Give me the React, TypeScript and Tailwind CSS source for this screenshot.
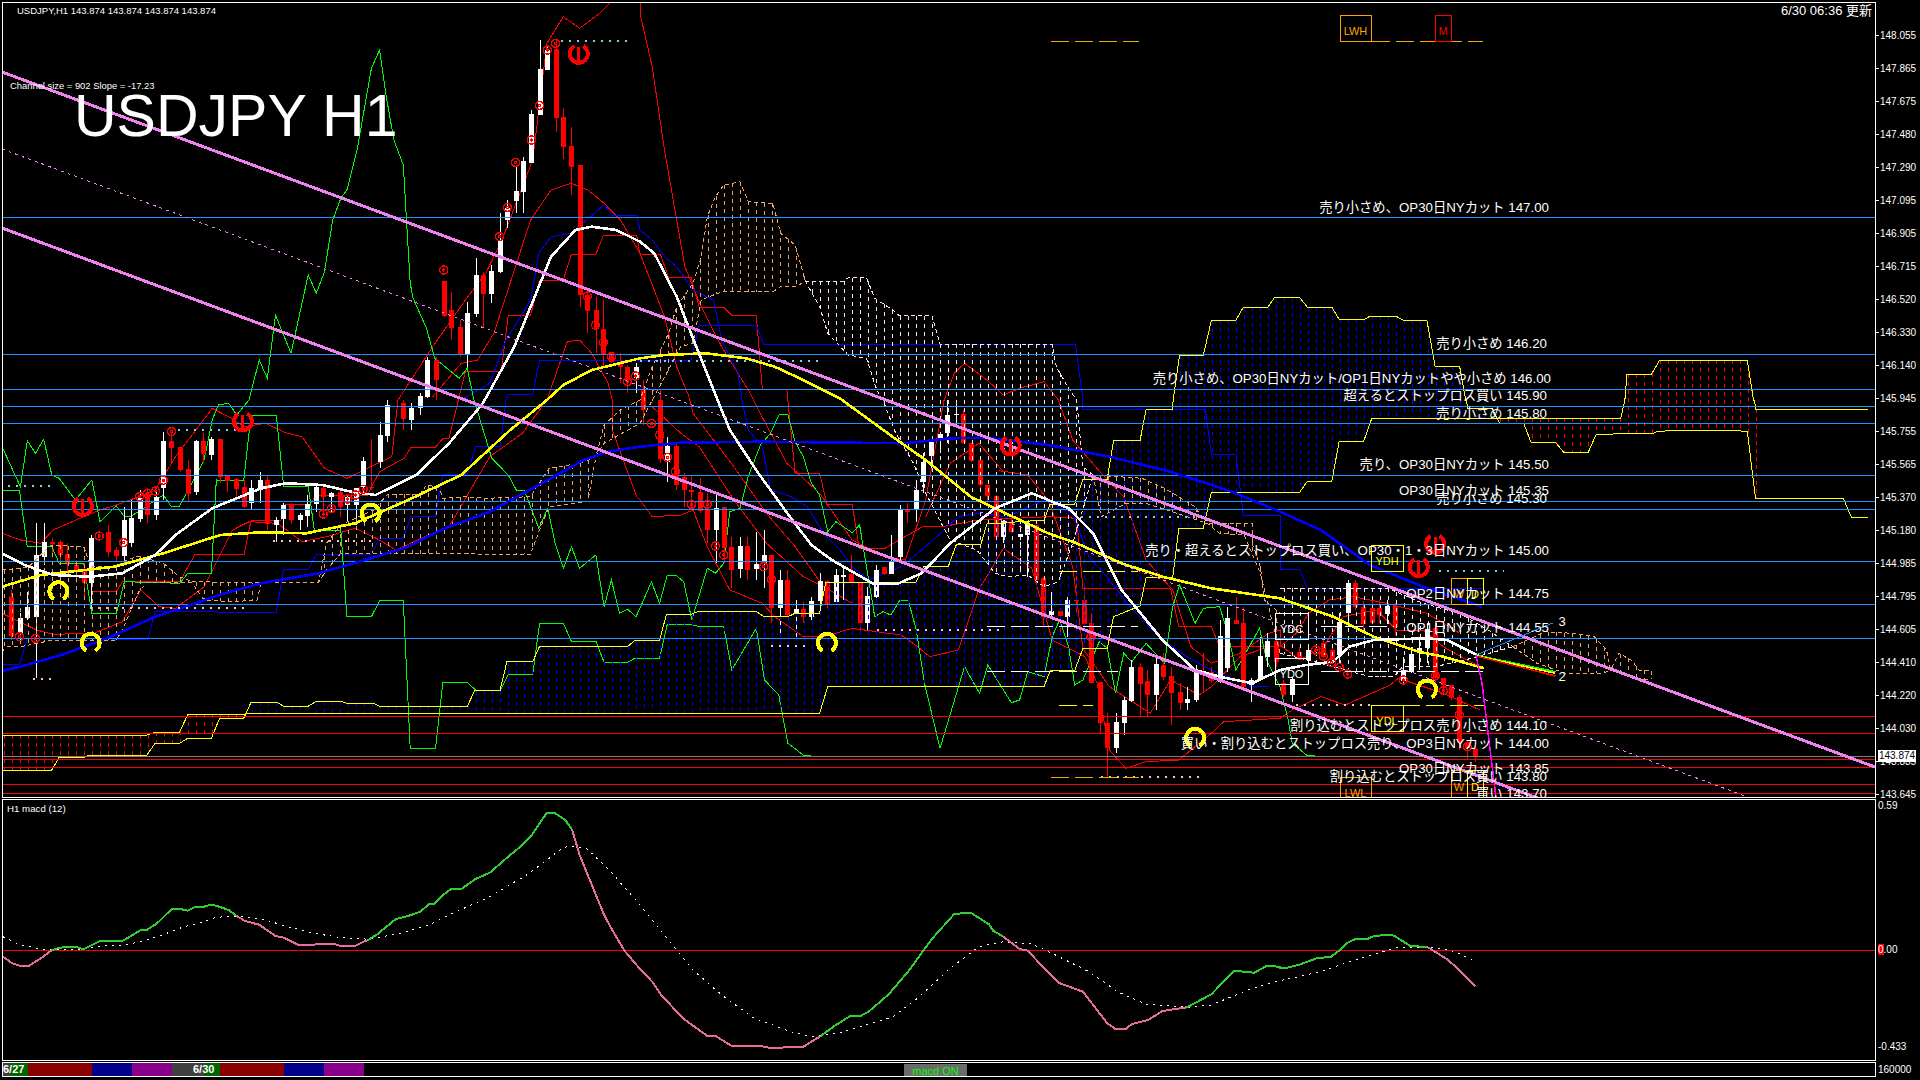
import React from "react";

type Pt = [number, number];
type Seg = [string, string];

// crop origin + scale of the traces read off the chart
const crops: Record<string, [number, number, number, number]> = {
    A: [0, 0, 2.45, 3],
    B: [640, 0, 2.45, 3],
    C: [1280, 0, 2.45, 3],
    D: [0, 400, 2.45, 3],
    E: [640, 400, 2.45, 3],
    F: [1280, 400, 2.45, 3],
    G: [0, 790, 2.45, 3],
    H: [640, 790, 2.45, 3],
    I: [1280, 790, 2.45, 3],
    Z: [1280, 580, 3, 3],
};

const at = (crop: string, x: number, y: number): Pt => {
    const [ox, oy, sx, sy] = crops[crop];
    return [ox + x / sx, oy + y / sy];
};

const trace = (...segs: Seg[]): Pt[] =>
    segs.flatMap(([crop, s]) =>
        s
            .trim()
            .split(/\s+/)
            .map((p) => {
                const [x, y] = p.split(",").map(Number);
                return at(crop, x, y);
            })
    );

const toPoints = (pts: Pt[]) => pts.map(([x, y]) => `${x.toFixed(1)},${y.toFixed(1)}`).join(" ");

const yAt = (pts: Pt[], x: number): number | null => {
    for (let i = 0; i < pts.length - 1; i++) {
        const [x0, y0] = pts[i];
        const [x1, y1] = pts[i + 1];
        if (x1 > x0 && x >= x0 && x <= x1) return y0 + ((y1 - y0) * (x - x0)) / (x1 - x0);
    }
    return null;
};

const gridX = (from: number, to: number) => {
    const out: number[] = [];
    for (let x = 4 + 8 * Math.ceil((from - 4) / 8); x <= to; x += 8) out.push(x);
    return out;
};

const spanA = trace(
    ["D", "5,1005 360,1005 380,997 440,997 460,943 597,943 615,940 1568,940"],
    ["E", "0,940 440,940 460,859 990,859 1005,812 1065,812 1085,745 1145,745 1160,650 1225,618 1240,533 1305,533 1320,385 1380,385 1400,277 1568,277"],
    ["F", "0,277 48,277 67,244 127,244 145,124 205,124 225,55 835,55"],
    ["C", "845,1200 850,1123 910,1123 930,1081 1145,1081 1160,1200"],
    ["F", "1163,0 1165,28 1440,28"]
);

const spanB = trace(
    ["D", "5,1110 127,1110 145,1072 205,1072 220,1065 360,1065 380,1030 440,1030 460,1015 518,1015 538,955 597,955 615,907 678,907 695,919 755,919 775,904 835,904 850,910 915,910 930,919 1145,919 1163,872 1225,872 1242,785 1305,785 1322,739 1538,739 1555,722 1568,722"],
    ["E", "0,720 48,720 65,643 125,643 143,634 285,634 303,650 362,650 380,640 440,640 455,548 675,548 695,500 755,500 775,434 835,434 850,372 990,360 1005,312 1065,312 1085,237 1145,237 1160,122 1225,122 1240,28 1305,28"],
    ["B", "1306,1200 1322,1066 1380,1066 1400,961 1460,961 1478,922 1538,922 1555,892 1568,892"],
    ["C", "0,892 48,892 67,922 127,922 145,958 207,958 220,949 285,949 302,961 360,961 380,1099 440,1099 455,1200"],
    ["F", "456,0 460,25 520,25 538,70 597,70 615,127 675,127 695,157 755,157 775,103 915,100 925,94 1000,90 1080,90 1145,94 1165,295 1380,295 1400,352 1440,352"]
);

const sandClouds: { top: Pt[]; low: Pt[]; color: string }[] = [
    {
        top: trace(["D", "5,510 45,505 70,500 125,435 205,440 222,500 290,500 300,485 340,468 400,490 440,530 470,545 640,548"]),
        low: trace(["D", "5,755 15,740 60,738 130,720 285,720 300,690 340,575 360,548 470,548 500,600 570,605 630,600 640,548"]),
        color: "#f4a460",
    },
    {
        top: trace(
            ["D", "640,548 780,548 800,430 835,375 915,330 950,282 1030,282 1045,255 1075,262 1085,295 1140,290 1190,295 1300,290 1345,205 1420,190 1460,170 1480,75 1520,30 1568,0"],
            ["B", "30,1100 70,1000 90,920 130,850 150,770 165,650 185,590 205,555 245,545 265,605 325,610 345,700 380,735 405,843"]
        ),
        low: trace(
            ["D", "640,548 780,548 800,510 835,460 1300,463 1320,395 1345,320 1440,305 1460,170 1480,130 1568,70"],
            ["B", "100,1040 130,1030 150,900 190,880 205,875 325,875 345,860 385,858 405,843"]
        ),
        color: "#f4a460",
    },
    {
        top: trace(
            ["B", "405,843 500,843 510,833 555,833 575,895 625,935 635,947 715,947 735,1033 1010,1033 1020,1100 1050,1165 1070,1200"],
            ["E", "1085,200 1110,225"]
        ),
        low: trace(
            ["B", "405,843 440,920 460,1000 510,1065 555,1075 580,1170 595,1200"],
            ["E", "625,95 670,190 700,280 760,420 825,450 870,520 900,530 950,525 990,560 1025,545 1060,430 1110,225"]
        ),
        color: "#ffe4e1",
    },
    {
        top: trace(["E", "1110,225 1230,235 1285,265 1360,320 1385,370 1500,370 1500,430 1520,500 1530,600 1568,640"]),
        low: trace(["E", "1110,225 1130,350 1190,310 1240,310 1390,370 1420,400 1480,405 1520,520 1568,760"]),
        color: "#f4a460",
    },
    {
        top: trace(["F", "0,565 265,565 350,610 440,640 510,690 570,740"]),
        low: trace(["F", "0,760 100,790 220,830 280,830 300,800 380,800 470,775 570,740"]),
        color: "#ffe4e1",
    },
    {
        top: trace(["F", "570,740 650,695 715,700 770,710 800,750 810,810 830,760 860,780 880,810 910,810 910,838"]),
        low: trace(["F", "570,740 630,790 700,820 790,820 810,810 880,838 910,838"]),
        color: "#f4a460",
    },
];

const thinRed: Pt[][] = [
    trace(
        ["D", "5,400 50,420 100,430 130,390 205,350 245,330 285,315 340,290 380,270 430,170 480,90 520,25 560,50 600,80 650,70 700,98 740,110 795,205 850,235 900,205 960,170"],
        ["A", "975,1200 1060,1040 1140,900 1190,820 1230,720 1305,480 1340,130 1380,50 1420,85 1470,40 1510,-10"],
        ["B", "0,-10 0,40 30,200 60,450 90,660 110,800 150,920 200,1040 270,1180"],
        ["E", "290,30 360,190 440,280 520,420 600,470 650,480 700,300 745,0"],
        ["B", "770,1120 795,1090 850,1140 890,1185 930,1165 990,1145 1025,1200"],
        ["E", "1060,120 1130,220 1185,290 1240,480 1305,570 1350,740 1400,790 1470,760 1540,700 1568,690"],
        ["Z", "0,195 60,240 130,200 190,110 260,95 290,90 350,150 430,150 490,200 560,240 600,260"]
    ),
    trace(
        ["D", "5,640 90,690 130,703 230,700 300,665 345,570 390,620 430,625 500,560 570,390 610,365 680,370 740,425 800,410 870,385 930,420 970,450 1040,410 1100,380 1200,170 1280,100 1340,0"],
        ["A", "1390,1025 1420,1020 1450,1060 1490,1150 1500,1200"],
        ["D", "1500,90 1560,290 1568,300"],
        ["E", "30,350 100,345 130,330 165,440 220,570 300,610 330,650 400,710 450,710 520,685 580,695 640,705 680,740 710,770 780,750 830,570 890,445 960,505 1010,720 1090,770 1120,850 1150,1050 1190,1105 1240,1085 1320,1080 1400,1000 1430,965 1568,955"],
        ["F", "30,930 100,890 160,915 270,855 290,835 400,880 490,930"]
    ),
    trace(
        ["A", "1060,1190 1130,1090 1170,1080 1210,1000 1300,660 1350,570 1400,550 1440,570 1480,610 1520,660 1568,760"],
        ["B", "60,950 90,1100 120,1190"],
        ["E", "130,40 230,200 310,340 380,440 450,560 520,610"]
    ),
    trace(["E", "30,20 100,100 145,140 230,300 310,430 400,530 450,560"]),
    trace(["E", "880,212 950,225 1000,300 1060,500 1085,745 1150,860 1250,940 1300,840 1370,885 1400,860 1470,770 1540,740"]),
    trace(["E", "700,350 760,190 830,130 890,215"]),
    trace(
        ["D", "225,575 285,575 300,545 440,545 478,463 598,463 615,362 690,360 700,312 760,312 775,285 900,285 930,215 990,175 1007,142 1067,142 1085,115 1100,115"],
        ["A", "1140,1115 1228,1115 1245,945 1300,945 1322,840 1380,840 1400,763 1460,763 1478,706 1560,706 1568,763"],
        ["B", "0,763 50,763 70,832 125,832 145,922 205,922 225,946 285,946 300,1168 360,1168"],
        ["E", "362,0 380,220 440,220 458,312 520,312 537,445 600,445 695,378 750,378 830,360 1000,350 1070,355 1085,565 1300,565 1320,680 1400,680 1420,740 1568,740"],
        ["F", "0,740 40,700 70,640 120,600 180,590 260,610 360,640 440,700"]
    ),
];

const thinBlue: Pt[][] = [
    trace(
        ["D", "5,793 48,793 67,715 362,718 380,635 677,637 695,508 755,508 775,463 910,463 930,415 988,415 1007,348 1067,348 1085,223 1145,223 1165,140 1225,140 1240,0"],
        ["A", "1245,1183 1305,1183 1322,1080 1568,1080"],
        ["B", "0,1080 125,1080 145,975 285,975 303,1033 1067,1033 1085,1200"],
        ["E", "1085,28 1385,28 1400,162 1460,162 1478,345 1568,345"],
        ["F", "0,508 48,508 67,565 495,565"]
    ),
    trace(
        ["A", "1130,1200 1200,1150 1240,1020 1300,900 1320,760 1350,710 1400,700 1480,615 1500,645 1560,645 1568,690"],
        ["B", "30,720 60,770 90,800 130,870 180,900 200,1020 240,1120 250,1200"],
        ["E", "265,90 300,140 320,270 370,290 410,320 450,400 490,450 520,500 560,540 640,500 700,440 780,350 830,340 900,350 990,300 1060,340 1100,470 1150,540 1200,620 1280,720 1340,770 1400,810 1500,860 1540,860"]
    ),
];

const stepGreen = trace(
    ["D", "5,272 48,272 67,440 127,440 145,490 205,490 225,640 285,640 305,545 440,550 460,520 518,520 530,240 597,243 615,45 677,45 695,260 755,258 770,390 835,390 850,650 910,650 930,602 988,602 1005,1045 1067,1045 1085,847 1145,847 1165,870 1225,872 1245,823 1305,823 1322,670 1380,670 1400,724 1460,724 1480,787 1538,787 1555,775 1568,775"],
    ["E", "0,775 48,775 67,673 125,673 145,680 205,680 225,810 285,685 305,840 340,885 362,1030 400,1065 420,1067"]
);

const chikou = trace(
    ["D", "5,140 50,260 67,122 87,160 107,118 127,225 145,235 185,300 225,240 245,365 285,318 305,350 320,350 400,285 420,320 440,318 500,180 520,60 535,15 560,10 580,45 610,0"],
    ["A", "635,1080 655,1135 675,945 713,1060 755,825 775,880 795,815 815,660 835,595 850,570 875,450 910,205 930,150 945,280 965,420 988,495 1005,850 1012,895 1045,985 1065,1075 1085,1095 1125,1135 1145,1105 1160,1195"],
    ["D", "1205,175 1245,225 1265,270 1285,272 1320,385 1342,325 1360,430 1380,505 1400,440 1420,505 1460,465 1480,620 1498,540 1518,640 1538,628 1558,650 1568,625"],
    ["E", "28,545 48,610 67,525 87,525 107,545 127,660 165,505 185,520 205,490 220,335 245,325 265,230 295,135 320,100 340,45 362,43 380,125 400,170 420,250 440,285 460,395 480,365 520,398 538,375 555,500 575,650 595,635 615,645 637,600 657,600 677,690 697,850 735,1045 795,800 832,880 852,795 910,908 930,900 950,815 990,830 1010,710 1028,660 1050,740 1065,855 1085,840 1125,725 1145,745 1165,880 1185,760 1205,785 1240,730 1285,790 1305,620 1322,555 1360,670 1380,625 1420,620 1440,700 1460,810 1518,685 1535,780 1568,860"],
    ["F", "20,960 30,1030 65,1065 85,1067"]
);

const thickBlue = trace(
    ["D", "5,813 50,800 150,765 240,725 300,695 380,650 450,622 550,580 640,550 780,520 880,485 1000,440 1080,390 1200,335 1350,235 1430,180 1490,155 1568,140"],
    ["E", "100,128 300,125 520,128 650,130 760,115 850,113 1000,135 1150,170 1300,215 1450,275 1568,335"],
    ["F", "100,390 220,495 280,525 350,560 410,585 495,620"]
);

const thickYellow = trace(
    ["D", "5,560 100,525 280,500 400,460 540,405 640,397 750,400 870,370 1000,300 1130,225 1250,90 1340,0"],
    ["A", "1380,1155 1450,1110 1568,1075"],
    ["B", "60,1065 160,1060 260,1075 330,1100 400,1140 490,1195"],
    ["E", "495,0 630,120 700,180 810,290 870,325 1000,400 1070,430 1180,490 1280,530 1400,565 1568,595"],
    ["F", "130,650 230,710 340,755 400,770 500,805"]
);

const thickWhite = trace(
    ["D", "5,460 60,495 130,525 220,530 300,520 380,465 430,405 520,325 640,265 700,250 790,255 860,275 920,285 1020,225 1100,130 1180,15"],
    ["A", "1190,1195 1260,1040 1320,860 1350,770 1410,690 1450,680 1510,690 1568,725"],
    ["B", "35,760 90,890 125,1000 190,1200"],
    ["E", "220,90 290,220 370,355 420,435 470,480 570,550 630,552 690,520 760,430 870,325 960,280 1050,325 1110,400 1180,570 1280,720 1360,810 1420,830 1500,850"],
    ["F", "0,810 65,795 130,785 170,740 230,720 360,715 410,720 490,770"]
);

// x, white?, body top, body bottom, wick top, wick bottom
type Candle = [number, number, number, number, number, number];
const candleSets: [string, Candle[]][] = [
    ["D", [
        [28,0,592,708,570,720],[48,1,655,700,640,720],[67,1,620,655,575,660],[87,1,465,650,370,835],[107,1,425,470,370,495],
        [127,0,425,432,415,470],[146,0,425,465,420,490],[165,0,463,490,430,520],[185,0,495,515,480,550],[205,0,510,550,490,600],
        [224,1,415,550,405,620],[264,0,397,455,375,470],[283,0,450,468,440,485],[303,1,360,468,320,480],[322,1,355,430,300,440],
        [342,1,295,358,270,365],[361,0,283,345,265,370],[381,1,290,345,270,360],[400,1,122,265,95,300],[420,0,122,145,100,190],
        [440,0,140,210,140,215],[460,0,208,282,180,305],[479,1,122,275,120,285],[498,0,122,162,100,190],[518,1,117,165,110,180],
        [538,0,118,232,118,250],[557,0,225,242,225,275],[577,0,238,268,235,290],[597,0,262,322,240,325],[616,1,265,308,240,330],
        [636,1,240,270,215,310],[655,0,240,372,225,390],[675,1,360,376,350,425],[694,1,315,358,310,405],[714,0,315,360,310,372],
        [734,1,345,360,340,390],[753,1,313,348,285,380],[773,1,262,312,255,335],[792,0,265,292,255,345],[812,1,278,292,275,340],
        [832,0,277,320,270,350],[851,1,290,315,285,365],[871,1,265,315,265,375],[890,1,183,260,172,285],[910,0,260,265,118,270],
        [930,1,105,185,65,205],[949,1,15,108,0,125],[988,0,8,58,0,90],[1008,1,25,60,10,90],[1028,1,-12,25,-20,45],
    ]],
    ["A", [
        [1047,1,1080,1190,1070,1195],[1067,0,1080,1140,1070,1200],[1087,0,843,947,843,950],[1106,0,930,983,875,1020],[1126,0,980,1065,960,1070],
        [1145,1,938,1065,905,1100],[1165,1,825,942,775,950],[1184,0,825,882,815,980],[1204,1,813,882,795,910],[1224,1,720,815,640,820],
        [1243,1,625,660,600,685],[1263,1,572,602,500,640],[1282,1,483,575,470,640],[1302,1,342,490,330,490],[1322,1,208,345,120,345],
        [1341,1,150,210,140,210],[1361,0,148,353,120,395],[1380,0,352,440,325,478],[1400,0,438,500,380,585],[1420,0,495,885,495,920],
        [1439,0,885,933,880,1000],[1459,0,930,985,890,1060],[1478,0,988,1065,900,1100],[1498,0,1065,1085,1060,1090],[1518,0,1090,1100,1060,1150],
        [1537,0,1100,1140,1095,1180],[1557,1,1100,1135,1090,1180],
    ]],
    ["E", [
        [8,0,-30,30,-60,75],[48,0,0,178,-30,190],[67,1,137,185,110,245],[87,0,137,255,130,270],[107,0,230,270,220,320],
        [126,0,270,275,225,325],[146,0,275,332,235,340],[165,0,328,390,280,430],[185,1,325,390,280,490],[205,0,322,445,320,490],
        [224,0,440,510,410,565],[244,1,437,508,410,535],[263,0,437,510,410,540],[283,1,492,508,395,540],[303,1,465,490,390,565],
        [322,0,465,625,465,670],[342,1,540,625,510,710],[361,0,540,645,510,650],[381,1,628,640,600,710],[400,0,628,650,605,670],
        [420,1,603,650,590,660],[440,1,543,603,520,620],[459,0,543,615,540,625],[479,1,525,605,508,610],[498,1,525,530,500,600],
        [518,0,522,548,465,550],[538,0,550,668,545,700],[557,1,587,670,560,690],[577,1,510,590,495,595],[597,0,500,522,500,525],
        [616,1,485,522,405,520],[636,1,330,472,315,480],[655,0,330,335,310,370],[675,1,270,330,240,365],[694,1,185,245,160,280],
        [714,1,125,168,120,205],[734,1,103,113,100,160],[753,1,45,100,0,130],[773,1,42,46,0,75],[792,0,42,128,30,130],
        [812,0,128,182,128,185],[832,0,180,255,180,270],[851,0,255,288,255,310],[871,0,287,410,285,410],[890,1,362,412,360,430],
        [910,0,370,396,350,400],[930,1,402,412,365,520],[949,1,370,405,365,530],[969,0,375,540,370,560],[988,0,535,650,530,680],
        [1008,1,632,645,575,650],[1028,0,632,648,630,700],[1047,1,600,650,590,710],[1067,0,600,603,510,640],[1087,0,600,672,560,680],
        [1106,0,670,850,640,850],[1126,0,847,970,845,1000],[1145,0,970,1045,940,1130],[1165,1,966,1045,940,1060],[1185,1,900,970,890,1005],
        [1204,1,800,902,780,905],[1224,0,800,852,790,950],[1243,0,843,885,810,950],[1263,1,793,885,770,930],[1282,0,795,830,760,840],
        [1302,0,828,880,800,975],[1322,0,875,910,850,930],[1341,1,897,908,860,930],[1361,1,810,900,795,905],[1380,0,812,815,760,880],
        [1400,0,815,842,800,850],[1420,1,708,845,660,850],[1439,1,655,805,620,815],[1459,0,660,672,590,670],[1478,0,670,860,620,870],
        [1498,1,840,855,835,905],[1518,1,768,838,710,830],[1537,1,722,770,700,800],[1557,0,722,785,720,800],
    ]],
    ["Z", [
        [10,0,310,345,300,350],[35,1,298,345,290,365],[58,0,215,235,200,240],[83,1,210,240,200,260],[130,0,190,230,180,235],
        [155,0,210,240,200,245],[178,1,125,225,100,250],[203,1,10,98,0,120],[226,0,10,82,0,90],[250,0,82,132,62,150],
        [275,0,85,130,60,132],[298,0,85,105,60,130],[322,1,78,103,60,132],[346,0,78,140,70,165],[370,1,270,302,230,310],
        [394,1,222,275,200,280],[418,1,205,220,170,270],[442,1,147,205,130,250],[466,0,145,295,130,310],[490,0,295,315,295,345],
        [514,0,315,355,315,360],[538,0,352,490,345,510],[562,0,485,505,480,540],[586,0,507,528,505,545],
    ]],
];

const ringSets: [string, [number, number][]][] = [
    ["A", [[1087,810],[1224,710],[1243,622],[1263,487],[1302,420],[1322,316],[1341,150],[1361,130],[1439,888],[1459,975],[1478,1027],[1498,1070],[1537,1145],[1557,1128]]],
    ["D", [[48,710],[87,715],[243,408],[303,428],[342,290],[361,280],[381,273],[400,241],[420,95],[792,342],[812,325],[851,297],[871,285],[890,268]]],
    ["E", [[28,70],[48,105],[67,172],[87,215],[126,313],[165,313],[185,438],[205,465],[303,500],[322,538],[1105,710]]],
    ["Z", [[107,210],[130,228],[155,248],[178,262],[203,282],[370,300],[466,287],[490,332],[538,405],[562,500]]],
];

const shoes: [string, number, number, boolean][] = [
    ["A", 1418, 165, true],
    ["D", 203, 322, true],
    ["D", 595, 68, true],
    ["E", 908, 140, true],
    ["F", 380, 435, true],
    ["F", 340, 505, true],
    ["D", 143, 570, false],
    ["D", 222, 725, false],
    ["D", 908, 337, false],
    ["E", 458, 725, false],
    ["E", 1360, 1010, false],
    ["F", 360, 865, false],
];

const dotted: [string, number, number, number, string][] = [
    ["A", 1375, 1540, 123, "#87ceeb"],
    ["B", 0, 440, 1082, "#87ceeb"],
    ["D", 20, 125, 257, "#87ceeb"],
    ["D", 435, 580, 90, "#87ceeb"],
    ["E", 1080, 1380, 351, "#87ceeb"],
    ["F", 390, 550, 513, "#87ceeb"],
    ["D", 80, 125, 836, "#ffc0cb"],
    ["D", 220, 600, 623, "#ffc0cb"],
    ["D", 670, 920, 422, "#ffc0cb"],
    ["E", 320, 420, 737, "#ffc0cb"],
    ["E", 580, 880, 689, "#ffc0cb"],
    ["E", 1130, 1380, 1130, "#ffc0cb"],
    ["F", 40, 220, 914, "#ffc0cb"],
];

const dashed: [string, number, number, number, string][] = [
    ["B", 1007, 1223, 124, "#ffa500"],
    ["C", 225, 497, 124, "#ffa500"],
    ["E", 1007, 1223, 1132, "#ffa500"],
    ["E", 1027, 1220, 514, "#ffff00"],
    ["E", 1027, 1110, 916, "#ffff00"],
    ["F", 300, 500, 915, "#ffff00"],
    ["E", 850, 1220, 680, "#ffffff"],
    ["E", 850, 1170, 814, "#ffffff"],
    ["F", 100, 280, 680, "#ffffff"],
    ["F", 100, 500, 814, "#ffffff"],
];

// x0, x1, y0, y1 in page px, label, colour
const boxes: [number, number, number, number, string, string][] = [
    [1340, 1371, 15, 41, "LWH", "#ffa500"],
    [1435, 1451, 15, 41, "M", "#ff0000"],
    [1371, 1403, 545, 571, "YDH", "#ffff00"],
    [1451, 1467, 578, 604, "W", "#ffa500"],
    [1467, 1483, 578, 604, "D", "#ffff00"],
    [1275, 1308, 613, 639, "YDC", "#ffffff"],
    [1275, 1308, 658, 684, "YDO", "#ffffff"],
    [1371, 1403, 705, 731, "YDL", "#ffff00"],
    [1340, 1371, 777, 803, "LWL", "#ffa500"],
    [1451, 1467, 770, 797, "W", "#ffa500"],
    [1467, 1483, 770, 797, "D", "#ffff00"],
];

const labels: [number, number, string][] = [
    [1549, 207, "売り小さめ、OP30日NYカット 147.00"],
    [1547, 343, "売り小さめ 146.20"],
    [1551, 378, "売り小さめ、OP30日NYカット/OP1日NYカットやや小さめ 146.00"],
    [1547, 395, "超えるとストップロス買い 145.90"],
    [1547, 413, "売り小さめ 145.80"],
    [1549, 464, "売り、OP30日NYカット 145.50"],
    [1549, 490, "OP30日NYカット 145.35"],
    [1547, 498, "売り小さめ 145.30"],
    [1549, 550, "売り・超えるとストップロス買い、OP30・1・3日NYカット 145.00"],
    [1549, 593, "OP2日NYカット 144.75"],
    [1549, 627, "OP1日NYカット 144.55"],
    [1547, 725, "割り込むとストップロス売り小さめ 144.10"],
    [1549, 743, "買い・割り込むとストップロス売り、OP3日NYカット 144.00"],
    [1549, 768, "OP30日NYカット 143.85"],
    [1547, 776, "割り込むとストップロス買い 143.80"],
    [1547, 793, "買い 143.70"],
];

const blueLevels = [217, 354, 389, 406, 423, 475, 501, 509, 561, 604, 638];
const redLevels = [716, 733, 759, 767, 784, 793];

const axisPrices = [
    "148.055", "147.865", "147.675", "147.480", "147.290", "147.095", "146.905", "146.715", "146.520", "146.330", "146.140", "145.945",
    "145.755", "145.565", "145.370", "145.180", "144.985", "144.795", "144.605", "144.410", "144.220", "144.030", "143.835", "143.645",
];

const Shoe = ({ x, y, down }: { x: number; y: number; down: boolean }) => (
    <g transform={`translate(${x} ${y})${down ? " rotate(180)" : ""}`} fill="none" stroke={down ? "#ff0000" : "#ffff00"}>
        <path d="M-4.5 9A9 9 0 1 1 4.5 9" strokeWidth={4} />
        {down && <path d="M0 -9V8" strokeWidth={3} />}
    </g>
);

const MainChart = () => (
    <svg viewBox="3 3 1872 794" className="block w-[1872px] h-[794px]" shapeRendering="crispEdges" fill="none">
        {thinRed.map((pts, i) => (
            <polyline key={i} points={toPoints(pts)} stroke="#ff0000" />
        ))}
        {thinBlue.map((pts, i) => (
            <polyline key={i} points={toPoints(pts)} stroke="#0000ff" />
        ))}
        <polyline points={toPoints(stepGreen)} stroke="#00ff00" />
        <polyline points={toPoints(chikou)} stroke="#00ff00" />
        {candleSets.flatMap(([crop, list]) =>
            list.map(([x, white, top, bot, wt, wb]) => {
                const [cx, y0] = at(crop, x, top);
                const [, y1] = at(crop, x, bot);
                const [, w0] = at(crop, x, wt);
                const [, w1] = at(crop, x, wb);
                const px = Math.round(cx);
                const color = white ? "#ffffff" : "#ff0000";
                return (
                    <g key={`${crop}${x}`}>
                        <rect x={px} y={w0} width={1} height={w1 - w0} fill={color} />
                        <rect x={px - 2} y={y0} width={5} height={Math.max(y1 - y0, 1)} fill={color} />
                    </g>
                );
            })
        )}
        {gridX(4, 1763).map((x) => {
            const a = yAt(spanA, x);
            const b = yAt(spanB, x);
            if (a === null || b === null) return null;
            return (
                <line key={x} x1={x} x2={x} y1={Math.min(a, b)} y2={Math.max(a, b)} stroke={b < a ? "#0000ff" : "#ff0000"} strokeDasharray="4 4" />
            );
        })}
        {sandClouds.map((cloud, i) => (
            <g key={i} stroke={cloud.color}>
                <polyline points={toPoints(cloud.top)} strokeDasharray="4 3" />
                <polyline points={toPoints(cloud.low)} strokeDasharray="4 3" />
                {gridX(cloud.top[0][0], cloud.top[cloud.top.length - 1][0]).map((x) => {
                    const t = yAt(cloud.top, x);
                    const l = yAt(cloud.low, x);
                    if (t === null || l === null) return null;
                    return <line key={x} x1={x} x2={x} y1={t} y2={l} strokeDasharray="4 4" />;
                })}
            </g>
        ))}
        <polyline points={toPoints(spanA)} stroke="#ffff00" />
        <polyline points={toPoints(spanB)} stroke="#ffff00" />
        {blueLevels.map((y) => (
            <line key={y} x1={3} x2={1875} y1={y} y2={y} stroke="#1e90ff" />
        ))}
        {redLevels.map((y) => (
            <line key={y} x1={3} x2={1875} y1={y} y2={y} stroke="#ff0000" />
        ))}
        <line x1={3} x2={1875} y1={756} y2={756} stroke="#808080" />
        <polyline points={toPoints(thickBlue)} stroke="#0000ff" strokeWidth={2.6} />
        <polyline points={toPoints(thickYellow)} stroke="#ffff00" strokeWidth={2.6} />
        <polyline points={toPoints(thickWhite)} stroke="#ffffff" strokeWidth={2.6} />
        {ringSets.flatMap(([crop, list]) =>
            list.map(([x, y]) => {
                const [cx, cy] = at(crop, x, y);
                return (
                    <g key={`${crop}${x}-${y}`} fill="none" stroke="#ff0000">
                        <circle cx={cx} cy={cy} r={4} strokeWidth={1.5} />
                        <circle cx={cx} cy={cy} r={1} strokeWidth={1.5} />
                    </g>
                );
            })
        )}
        <line x1={2} y1={72} x2={1875} y2={767} stroke="#ee82ee" strokeWidth={3} />
        <line x1={2} y1={228} x2={1540} y2={799} stroke="#ee82ee" strokeWidth={3} />
        <line x1={2} y1={149} x2={1745} y2={796} stroke="#ee82ee" strokeDasharray="3 4" />
        {dotted.map(([crop, x0, x1, y, color], i) => {
            const [a, py] = at(crop, x0, y);
            const [b] = at(crop, x1, y);
            return <line key={i} x1={a} x2={b} y1={py} y2={py} stroke={color} strokeWidth={2} strokeDasharray="2 6" />;
        })}
        {dashed.map(([crop, x0, x1, y, color], i) => {
            const [a, py] = at(crop, x0, y);
            const [b] = at(crop, x1, y);
            return <line key={i} x1={a} x2={b} y1={py} y2={py} stroke={color} strokeDasharray="18 6" />;
        })}
        <polyline points={toPoints(trace(["F", "480,765 670,668"]))} stroke="#1e90ff" />
        <polyline points={toPoints(trace(["F", "480,765 675,815"]))} stroke="#00ff00" strokeWidth={1.5} />
        <polyline points={toPoints(trace(["F", "480,767 675,820"]))} stroke="#ffff00" strokeWidth={1.5} />
        <polyline points={toPoints(trace(["F", "480,768 675,828"]))} stroke="#ff0000" strokeWidth={1.5} />
        <polyline points={toPoints(trace(["F", "480,765 495,850 505,950 520,1100 530,1200"]))} stroke="#ff00ff" strokeWidth={1.5} />
        {shoes.map(([crop, x, y, down], i) => {
            const [cx, cy] = at(crop, x, y);
            return <Shoe key={i} x={cx} y={cy} down={down} />;
        })}
        {boxes.map(([x0, x1, y0, y1, name, color], i) => (
            <g key={i}>
                <rect x={x0} y={y0} width={x1 - x0} height={y1 - y0} stroke={color} />
                <text x={(x0 + x1) / 2} y={y1 - 6} fill={color} stroke="none" textAnchor="middle" className="text-[11px]">
                    {name}
                </text>
            </g>
        ))}
        <text x={1562} y={626} fill="#ffffff" textAnchor="middle" className="text-[13px]">3</text>
        <text x={1562} y={681} fill="#ffffff" textAnchor="middle" className="text-[13px]">2</text>
        {labels.map(([x, y, text]) => (
            <text key={text} x={x} y={y + 4.5} fill="#ffffff" textAnchor="end" className="text-[13.3px]">
                {text}
            </text>
        ))}
        <text x={74} y={136} fill="#ffffff" className="text-[59px]">USDJPY H1</text>
        <text x={17} y={14} fill="#ffffff" className="text-[9.5px]">USDJPY,H1  143.874 143.874 143.874 143.874</text>
        <text x={10} y={89} fill="#ffffff" className="text-[9.4px]">Channel size = 902 Slope = -17.23</text>
        <text x={1872} y={15} fill="#ffffff" textAnchor="end" className="text-[13px]">6/30 06:36 更新</text>
    </svg>
);

const macdGreen = [
    trace(["G", "125,482 145,473 185,470 205,478 245,453 300,453 345,420 360,420 385,400 420,358 445,358 460,362 480,350 500,350 515,344 530,347 560,360 580,378"]),
    trace(["G", "900,452 925,432 970,387 1000,378 1030,365 1050,343 1065,341 1085,315 1105,297 1130,297 1165,267 1200,248 1245,200 1280,165 1300,140 1340,68 1360,70 1385,90 1402,120"]),
    trace(["H", "440,740 480,705 515,678 540,678 560,665 610,612 660,540 695,480 720,440 770,372 810,368 855,403 865,422 890,440"]),
    trace(["H", "1340,652 1400,613 1455,542 1505,548 1535,528 1568,530"], ["I", "0,534 15,534 45,525 90,505 125,500 145,482 165,458 185,447 215,447 225,440 260,434 280,437 320,469 360,470"]),
];

const macdPink = [
    trace(["G", "7,500 30,520 50,528 70,528 100,505 125,482"]),
    trace(["G", "580,378 600,393 635,404 675,438 695,443 730,464 770,464 780,461 820,462 835,468 870,468 890,455 900,452"]),
    trace(["G", "1402,120 1420,195 1440,255 1480,375 1500,420 1530,482 1568,537"], ["H", "0,537 30,575 50,612 105,685 165,738 185,738 225,768 295,768 320,774 400,770 440,740"]),
    trace(["H", "890,440 930,477 950,482 990,535 1025,578 1085,605 1145,700 1165,717 1190,717 1205,702 1245,690 1280,663 1340,652"]),
    trace(["I", "360,470 410,508 430,530 478,588"]),
];

const macdSignal = trace(
    ["G", "7,440 50,465 110,479 205,478 250,468 300,467 360,450 420,425 450,410 480,402 530,382 580,378 650,390 700,408 760,428 830,442 905,448 980,430 1050,405 1100,375 1200,320 1290,255 1340,210 1380,172 1410,168 1440,178 1500,250 1568,345"],
    ["H", "60,435 130,540 200,615 280,685 370,725 420,740 500,725 620,680 680,625 760,535 830,470 890,455 960,462 1010,490 1100,545 1170,605 1240,643 1340,652 1400,645 1500,595 1568,572"],
    ["I", "100,545 170,515 245,487 290,472 380,472 430,485 470,510"]
);

const MacdChart = () => (
    <svg viewBox="3 800 1872 260" className="block w-[1872px] h-[260px]" shapeRendering="crispEdges" fill="none">
        <line x1={3} x2={1875} y1={950} y2={950} stroke="#ff0000" />
        <polyline points={toPoints(macdSignal)} stroke="#ffffff" strokeDasharray="2 5" />
        {macdPink.map((pts, i) => (
            <polyline key={i} points={toPoints(pts)} stroke="#e76d9e" strokeWidth={2} />
        ))}
        {macdGreen.map((pts, i) => (
            <polyline key={i} points={toPoints(pts)} stroke="#32cd32" strokeWidth={2} />
        ))}
        <text x={7} y={812} fill="#ffffff" className="text-[9.7px]">H1  macd (12)</text>
    </svg>
);

const AxisLabel = ({ children }: { children: React.ReactNode }) => (
    <div className="flex items-center h-[33px] gap-px">
        <div className="w-[3px] h-px bg-white" />
        <span className="text-[10px] text-white">{children}</span>
    </div>
);

export default function App() {
    return (
        <div className="w-[1920px] h-[1080px] bg-black overflow-hidden pl-[2px] pt-[2px] font-['Liberation_Sans','Noto_Sans_CJK_JP',sans-serif] whitespace-pre">
            <div className="flex">
                <div className="w-[1874px] h-[796px] border border-white">
                    <MainChart />
                </div>
                <div className="relative flex-1 h-[796px] pt-[17px]">
                    {axisPrices.map((price) => (
                        <AxisLabel key={price}>{price}</AxisLabel>
                    ))}
                    <div className="absolute left-[2px] top-[748px] w-[38px] h-[12px] bg-white text-black text-[10px] leading-[12px] text-center">
                        143.874
                    </div>
                </div>
            </div>
            <div className="flex mt-px">
                <div className="w-[1874px] h-[262px] border border-white">
                    <MacdChart />
                </div>
                <div className="relative flex-1 h-[262px] pl-[2px] text-[10px] text-white">
                    <div className="mt-[1px] leading-[12px]">0.59</div>
                    <div className="mt-[132px] leading-[12px] w-fit">
                        <span className="bg-[#ff0000]">0</span>.00
                    </div>
                    <div className="mt-[85px] leading-[12px]">-0.433</div>
                </div>
            </div>
            <div className="flex mt-px">
                <div className="flex w-[1874px] h-[15px] border-y border-x border-white overflow-hidden text-white">
                    <div className="relative flex h-[13px]">
                        <div className="w-[7px] bg-[#404040]" />
                        <div className="w-[18px] bg-[#006400]" />
                        <div className="w-[64px] bg-[#8b0000]" />
                        <div className="w-[40px] bg-[#00008b]" />
                        <div className="w-[40px] bg-[#8b008b]" />
                        <div className="w-[32px] bg-[#404040]" />
                        <div className="w-[16px] bg-[#006400]" />
                        <div className="w-[64px] bg-[#8b0000]" />
                        <div className="w-[40px] bg-[#00008b]" />
                        <div className="w-[40px] bg-[#8b008b]" />
                        <span className="absolute left-0 top-0 text-[11px] leading-[13px] font-bold">6/27</span>
                        <span className="absolute left-[190px] top-0 text-[11px] leading-[13px] font-bold">6/30</span>
                    </div>
                    <div className="ml-[540px] mt-px w-[63px] h-[12px] bg-[#6b6b6b] text-[#00ff00] text-[11px] leading-[14px] text-center overflow-hidden">
                        macd ON
                    </div>
                </div>
                <div className="flex-1 pl-[2px] text-[10px] leading-[15px] text-white">160000</div>
            </div>
        </div>
    );
}
